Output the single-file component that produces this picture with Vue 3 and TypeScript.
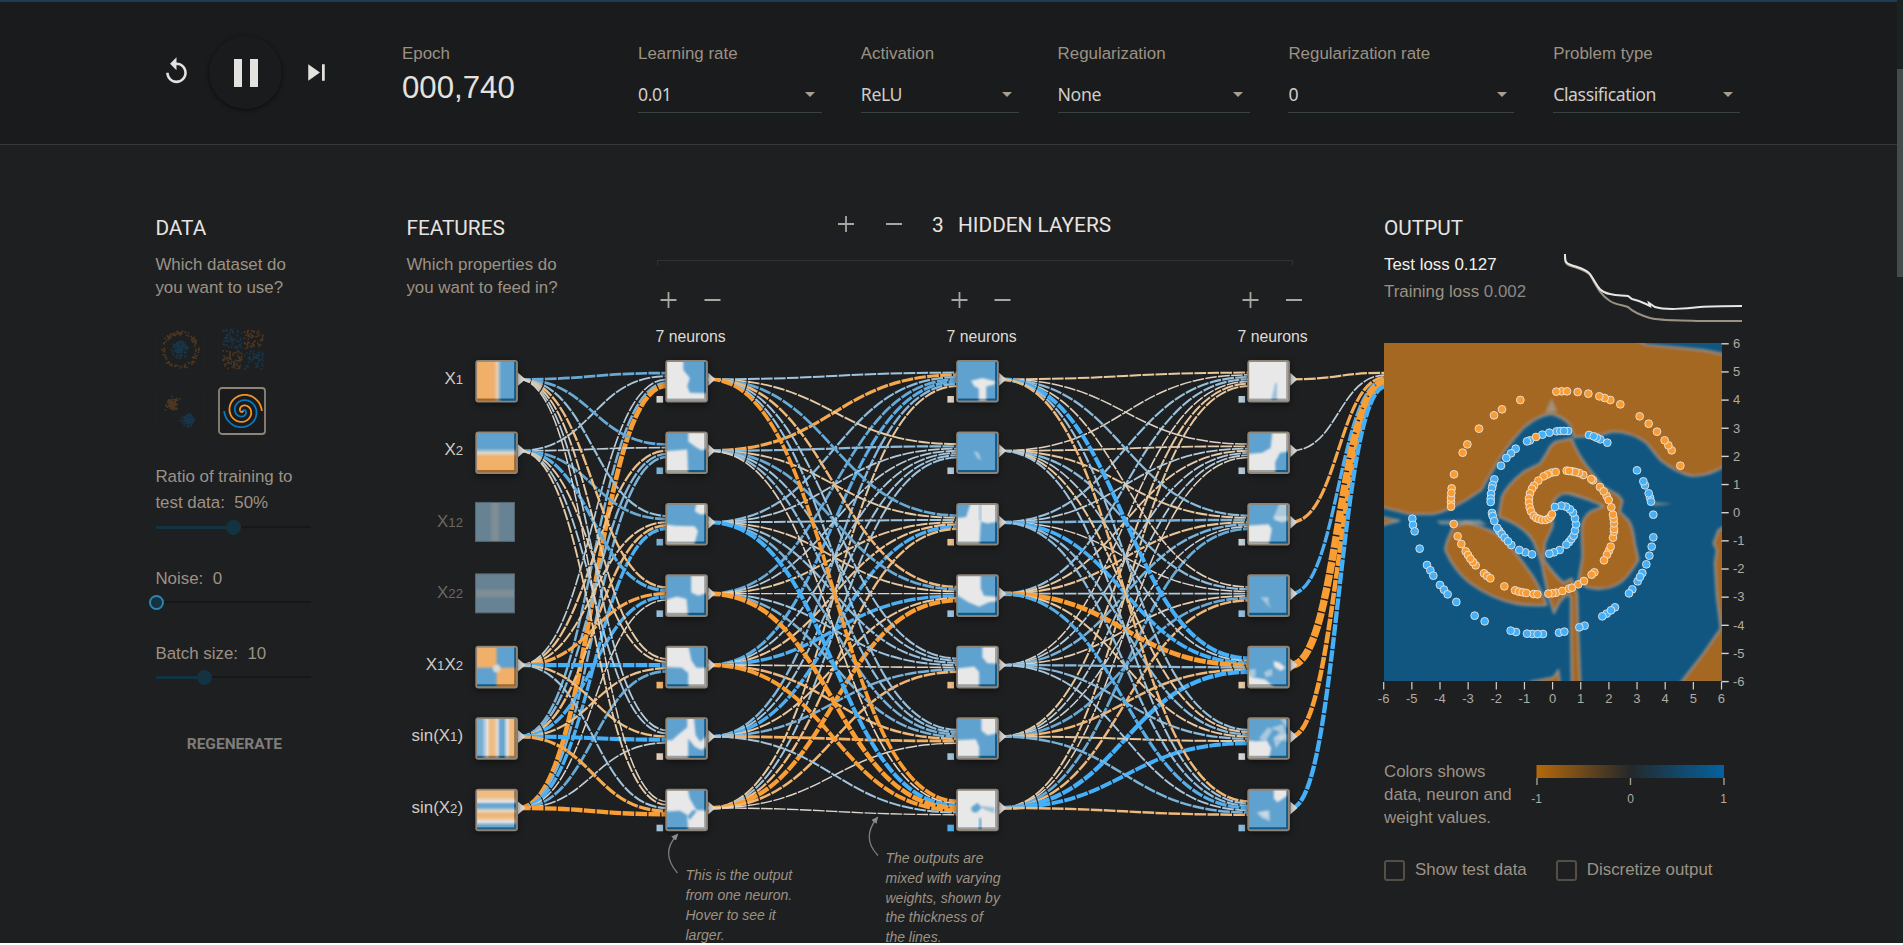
<script setup lang="ts">
interface Field { label: string; value: string; width: number }
interface Heat { base: 'w' | 'b'; shapes: string[]; faint?: string[] }
type Pt = [number, number]

const fields: Field[] = [
  { label: 'Learning rate', value: '0.01', width: 184 },
  { label: 'Activation', value: 'ReLU', width: 158 },
  { label: 'Regularization', value: 'None', width: 192 },
  { label: 'Regularization rate', value: '0', width: 226 },
  { label: 'Problem type', value: 'Classification', width: 187 },
]

const rowY = (i: number) => 360 + i * 71.45
const midY = (i: number) => rowY(i) + 19.3
const layerX = [475.3, 665.3, 956.2, 1247.3]

const featureRows = [
  { row: 0, kind: 'x', on: true, text: [['X', '1']] },
  { row: 1, kind: 'y', on: true, text: [['X', '2']] },
  { row: 2, kind: 'xx', on: false, text: [['X', '12']] },
  { row: 3, kind: 'yy', on: false, text: [['X', '22']] },
  { row: 4, kind: 'xy', on: true, text: [['X', '1'], ['X', '2']] },
  { row: 5, kind: 'sx', on: true, text: [['sin(X', '1'], [')', '']] },
  { row: 6, kind: 'sy', on: true, text: [['sin(X', '2'], [')', '']] },
]

// weights[layer][target][source]
const weights: number[][][] = [
  [
    [0.6, 0.25, 0.15, 0.5, -1.5],
    [0.6, 0.15, -0.4, 0.45, 0.5],
    [0.35, 0.6, -0.3, -0.5, 0.9],
    [-0.45, 0.8, -0.8, 0.9, -0.08],
    [-0.25, -0.25, 1.2, -0.4, 0.6],
    [0.2, 0.25, -0.45, 1.2, 0.15],
    [-0.08, -0.25, 0.3, -0.8, -1.3],
  ],
  [
    [0.3, -0.8, 0.4, 0.6, 0.75, 0.45, -0.3],
    [-0.25, 0.4, 0.2, 0.2, 0.25, 0.3, 0.3],
    [0.6, -0.25, 0.3, -0.3, -0.35, 0.9, -0.45],
    [-0.5, 0.6, -0.25, -0.05, 0.9, -0.3, -1.3],
    [0.3, 0.3, 0.35, 0.3, -0.15, 0.5, -0.55],
    [0.35, 0.4, 0.5, 0.5, -0.5, -0.65, -0.05],
    [-1.0, -0.15, 1.2, -1.4, -1.1, 0.3, -0.05],
  ],
  [
    [-0.3, -0.1, 0.35, 0.35, -0.1, -0.3, -0.3],
    [-0.1, -0.2, 0.2, -0.25, 0.2, 0.2, -0.1],
    [0.4, -0.3, 0.5, -0.35, 0.5, 0.1, 0.6],
    [-0.15, 0.4, -0.05, 0.2, -0.2, 0.6, -0.5],
    [1.2, 0.2, 1, -1.5, 0.4, -0.5, 1.3],
    [0.35, -0.3, 0.4, -0.3, 0.4, -0.3, 1.1],
    [-0.5, 0.3, 0.4, 0.8, 0.25, 0.5, -0.5],
  ],
]
const outWeights = [-0.4, 0.15, -0.8, 0.9, -2.6, -1.4, 1.3]

type RGB = [number, number, number]
const blueStops: [number, RGB][] = [[0, [220, 216, 213]], [0.3, [160, 196, 221]], [0.6, [104, 170, 214]], [1, [68, 176, 250]]]
const orangeStops: [number, RGB][] = [[0, [220, 216, 213]], [0.3, [232, 200, 158]], [0.6, [242, 178, 105]], [1, [250, 158, 52]]]
function tone(w: number): string {
  const stops = w >= 0 ? blueStops : orangeStops
  const a = Math.min(1, Math.abs(w))
  let k = 1
  while (k < stops.length - 1 && a > stops[k][0]) k++
  const [t0, c0] = stops[k - 1]
  const [t1, c1] = stops[k]
  const f = (a - t0) / (t1 - t0)
  return `rgb(${c0.map((v, i) => Math.round(v + (c1[i] - v) * f)).join(',')})`
}
const curve = (x0: number, y0: number, x1: number, y1: number) => {
  const m = (x0 + x1) / 2
  return `M${x0},${y0}C${m},${y0} ${m},${y1} ${x1},${y1}`
}
const spread = (i: number, n: number) => ((i - (n - 1) / 2) / n) * 15.6

const sourceRows = [[0, 1, 4, 5, 6], [0, 1, 2, 3, 4, 5, 6], [0, 1, 2, 3, 4, 5, 6]]
const links: { d: string; w: number }[] = []
weights.forEach((layer, l) => layer.forEach((ws, t) => ws.forEach((w, s) => {
  links.push({ d: curve(layerX[l] + 43.5, midY(sourceRows[l][s]), layerX[l + 1] + 2, midY(t) + spread(s, ws.length)), w })
})))
outWeights.forEach((w, s) => links.push({ d: curve(layerX[3] + 43.5, midY(s), 1386, 379.5 + spread(s, 7)), w }))
const linkWidth = (w: number) => 1.3 * (1 + 1.8 * Math.abs(w))

const biases = [
  [0.02, 0.5, 0.5, 0.35, -0.6, -0.15, 0.3],
  [-0.1, 0.2, -0.4, 0.3, -0.45, 0.3, 0.85],
  [0.2, 0.2, 0.12, 0.35, -0.25, 0.02, 0.4],
]

const heats: Heat[][] = [
  [
    { base: 'w', shapes: ['M50,-9V25L70,50L62,75L70,95L129,97V-9Z'] },
    { base: 'b', shapes: ['M65,-9V25L88,42L105,52L129,48V-9Z', 'M-9,55L62,50L65,129H-9Z'] },
    { base: 'b', shapes: ['M92,-9L85,20L102,30L129,28V-9Z', 'M-9,60L25,65L85,66L95,82L82,129H-9Z'] },
    { base: 'b', shapes: ['M74,-9V50L95,60L129,50V-9Z', 'M-9,75L30,63L60,70L65,129H-9Z'] },
    { base: 'w', shapes: ['M65,-9L75,40L90,62H129V-9Z', 'M-9,60L45,62L65,78V129H-9Z'] },
    { base: 'w', shapes: ['M-9,-9H62V25L32,50L15,65H-9Z', 'M82,-9L88,50L102,70L129,45V-9Z', 'M65,60V129H129V82L105,95L85,85Z'] },
    { base: 'w', shapes: ['M62,-9L70,25L90,60L129,62V-9Z', 'M-9,65L40,62L62,75L65,129H-9Z', 'M70,90L92,62L80,60L62,80Z'] },
  ],
  [
    { base: 'b', shapes: ['M40,58L75,50L115,60L112,70L87,76V129H64V82L50,75Z'] },
    { base: 'b', shapes: [], faint: ['M48,56L62,58L72,82L60,78Z'] },
    { base: 'w', shapes: ['M-9,-9H40L25,38L-9,42Z', 'M70,52L90,58L129,52V129H66Z'], faint: ['M65,0H72V50H65Z'] },
    { base: 'b', shapes: ['M-9,-9H70V38L80,60L129,64V76L95,80L65,94L32,80L-9,55Z'] },
    { base: 'b', shapes: ['M75,-9V30L90,48L129,50V-9Z', 'M-9,65L50,58L65,75V129H-9Z'] },
    { base: 'b', shapes: ['M72,-9V35L90,50L129,42V-9Z', 'M-9,65L55,62L65,85V129H-9Z'] },
    { base: 'w', shapes: ['M40,52L60,38L72,54L58,68L44,66Z', 'M65,85H72V129H65Z'], faint: ['M60,46L112,52V70L85,60Z'] },
  ],
  [
    { base: 'w', shapes: [], faint: ['M80,65H86V120H68Z'] },
    { base: 'w', shapes: ['M-9,-9H72L66,45L40,60L-9,64Z', 'M129,55L95,60L80,90L82,129H129Z'] },
    { base: 'b', shapes: ['M-9,65L60,60L70,75L60,129H-9Z'], faint: ['M95,-9L75,40L100,56L129,45V-9Z', 'M75,35H129V50H80Z'] },
    { base: 'b', shapes: [], faint: ['M35,65L60,65L60,85L70,98L58,90Z'] },
    { base: 'b', shapes: ['M-9,82L15,92L50,98L85,129H-9Z', 'M75,42L92,45L112,62L98,72L78,60Z'], faint: ['M45,76L70,65L72,85L52,92Z', 'M-9,70L20,65V90H-9Z'] },
    { base: 'b', shapes: ['M-9,65L20,68L55,66L68,90L60,129H-9Z'], faint: ['M30,60L58,25L72,34L50,70Z', 'M65,28L105,15L114,50L82,90L75,60L95,40Z', 'M70,60L118,45V70L85,60Z', 'M95,0H120V30Z'] },
    { base: 'b', shapes: ['M76,-9V25L88,36L118,15V-9Z'], faint: ['M22,68L62,60L65,95L40,85Z', 'M30,66L58,64L60,84L44,80Z'] },
  ],
]
const heatTone = { w: '#e8e8e8', b: '#5fa2cf' }

const bluePts: Pt[] = [[127, 566], [129, 585], [134, 604], [149, 656], [171, 705], [181, 721], [190, 737], [210, 765], [222, 779], [233, 793], [259, 816], [314, 857], [344, 874], [438, 906], [422, 902], [519, 912], [487, 912], [503, 912], [471, 911], [567, 908], [583, 905], [644, 887], [628, 892], [735, 832], [710, 851], [723, 841], [697, 859], [787, 778], [777, 790], [817, 729], [803, 754], [810, 741], [829, 703], [838, 677], [845, 650], [850, 622], [850, 554], [840, 503], [843, 515], [836, 490], [825, 466], [820, 454], [801, 421], [712, 338], [691, 328], [680, 323], [657, 315], [671, 319], [594, 303], [560, 304], [571, 303], [582, 303], [538, 308], [517, 314], [480, 331], [471, 334], [437, 356], [423, 370], [409, 384], [393, 407], [373, 448], [368, 465], [366, 475], [363, 492], [362, 506], [362, 516], [366, 549], [368, 558], [373, 573], [388, 603], [382, 594], [395, 612], [404, 623], [424, 645], [414, 634], [466, 667], [448, 660], [486, 673], [569, 660], [552, 667], [538, 671], [597, 636], [589, 644], [604, 627], [611, 617], [615, 602], [618, 583], [615, 565], [609, 548], [600, 538], [588, 530], [574, 527], [555, 531]]
const orangePts: Pt[] = [[931, 407], [905, 361], [895, 346], [884, 331], [861, 305], [836, 281], [809, 259], [751, 223], [721, 210], [704, 204], [688, 199], [655, 191], [623, 186], [575, 184], [591, 184], [559, 185], [451, 210], [396, 238], [372, 256], [327, 296], [292, 343], [278, 368], [252, 433], [245, 475], [243, 516], [243, 503], [244, 489], [243, 530], [251, 582], [263, 619], [274, 642], [287, 664], [294, 675], [317, 706], [309, 696], [301, 686], [342, 730], [351, 738], [361, 745], [403, 769], [435, 781], [447, 785], [458, 787], [469, 789], [491, 792], [502, 793], [558, 788], [547, 790], [535, 791], [577, 783], [597, 776], [606, 773], [625, 763], [642, 753], [673, 727], [665, 734], [717, 662], [711, 674], [702, 691], [722, 650], [729, 623], [732, 605], [732, 597], [732, 580], [731, 566], [729, 554], [724, 532], [710, 498], [716, 510], [690, 471], [701, 484], [669, 451], [664, 447], [640, 435], [627, 429], [606, 424], [616, 426], [590, 422], [597, 423], [545, 428], [557, 426], [533, 433], [521, 439], [505, 452], [492, 467], [486, 476], [480, 490], [477, 505], [477, 518], [479, 532], [483, 544], [491, 557], [499, 564], [507, 567], [517, 570], [527, 570], [536, 566], [542, 560], [546, 553], [498, 321]]

const ticks = Array.from({ length: 13 }, (_, i) => i - 6)

// Deterministic generator for the dataset thumbnails.
function rng(seed: number) {
  let s = seed
  return () => { s = (s * 16807) % 2147483647; return s / 2147483647 }
}
interface Dot { x: number; y: number; o: boolean }
function circleDots(): Dot[] {
  const r = rng(7), out: Dot[] = []
  for (let i = 0; i < 110; i++) { const a = r() * 6.283, d = 15 + r() * 4; out.push({ x: 24 + d * Math.cos(a), y: 24 + d * Math.sin(a), o: true }) }
  for (let i = 0; i < 130; i++) { const a = r() * 6.283, d = r() * 9; out.push({ x: 24 + d * Math.cos(a), y: 24 + d * Math.sin(a), o: false }) }
  return out
}
function xorDots(): Dot[] {
  const r = rng(21), out: Dot[] = []
  for (let i = 0; i < 250; i++) {
    const a = r() * 38 - 19, b = r() * 38 - 19
    out.push({ x: 25 + a + Math.sign(a), y: 23.5 + b + Math.sign(b), o: a * b < 0 })
  }
  return out
}
function gaussDots(): Dot[] {
  const r = rng(5), out: Dot[] = []
  const g = () => (r() + r() + r() + r() - 2) * 5
  for (let i = 0; i < 110; i++) { out.push({ x: 16.5 + g(), y: 17 + g(), o: true }); out.push({ x: 32.5 + g(), y: 32.5 + g(), o: false }) }
  return out
}
function spiral(delta: number): string {
  const p: string[] = []
  for (let i = 0; i <= 90; i++) {
    const t = (i / 90) * 3.5 * Math.PI + delta, d = (i / 90) * 18.8
    p.push(`${(25 + d * Math.sin(t)).toFixed(1)},${(24 - d * Math.cos(t)).toFixed(1)}`)
  }
  return 'M' + p.join('L')
}
const datasets = [circleDots(), xorDots(), gaussDots()]

const sliders = [
  { lines: ['Ratio of training to', 'test data:\u00a0 50%'], at: 50, kind: 'ratio' },
  { lines: ['Noise:\u00a0 0'], at: 0.4, kind: 'noise' },
  { lines: ['Batch size:\u00a0 10'], at: 31.3, kind: 'batch' },
]
const layerHeads = [
  { plus: 668.5, minus: 712.5, text: 655.5 },
  { plus: 959.5, minus: 1002.5, text: 946.5 },
  { plus: 1250.5, minus: 1294, text: 1237.5 },
]
</script>

<template>
  <div class="page">
    <div class="content">
      <header class="bar">
        <div class="controls">
          <svg class="reset" viewBox="0 0 24 24"><path d="M12 5V1L7 6l5 5V7c3.31 0 6 2.69 6 6s-2.69 6-6 6-6-2.69-6-6H4c0 4.42 3.58 8 8 8s8-3.58 8-8-3.58-8-8-8z" /></svg>
          <div class="play"><svg viewBox="0 0 24 24"><path d="M6 19h4V5H6v14zm8-14v14h4V5h-4z" /></svg></div>
          <svg class="next" viewBox="0 0 24 24"><path d="M6 18l8.5-6L6 6v12zM16 6v12h2V6h-2z" /></svg>
        </div>
        <div class="epoch">
          <span class="label">Epoch</span>
          <span class="count">000,740</span>
        </div>
        <div class="fields">
          <div v-for="f in fields" :key="f.label" class="field" :style="{ width: f.width + 'px' }">
            <span class="label">{{ f.label }}</span>
            <div class="select"><span>{{ f.value }}</span><i class="caret"></i></div>
          </div>
        </div>
      </header>

      <main class="main">
        <section class="data">
          <h4>DATA</h4>
          <p class="sub">Which dataset do<br />you want to use?</p>
          <div class="sets">
            <svg v-for="(s, i) in datasets" :key="i" class="thumb" viewBox="0 0 48 48">
              <rect x=".5" y=".5" width="47" height="47" rx="3" class="thumb-edge" />
              <rect v-for="(p, j) in s" :key="j" :x="p.x - 0.8" :y="p.y - 0.8" width="1.6" height="1.6" :class="p.o ? 'dim-o' : 'dim-b'" />
            </svg>
            <svg class="thumb picked" viewBox="0 0 48 48">
              <rect x="1" y="1" width="46" height="46" rx="3" class="picked-edge" />
              <path :d="spiral(0)" class="sp-b" /><path :d="spiral(Math.PI)" class="sp-o" />
            </svg>
          </div>
          <div v-for="s in sliders" :key="s.kind" class="slider" :class="s.kind">
            <span v-for="l in s.lines" :key="l">{{ l }}</span>
            <div class="track">
              <div class="fill" :style="{ width: s.at + '%' }"></div>
              <div class="knob"></div>
            </div>
          </div>
          <button class="regen">REGENERATE</button>
        </section>

        <section class="network">
          <h4>FEATURES</h4>
          <p class="sub">Which properties do<br />you want to feed in?</p>
          <svg class="net" viewBox="407 145 977 798" width="977" height="798">
            <defs>
              <filter id="soft" x="-20%" y="-20%" width="140%" height="140%"><feGaussianBlur stdDeviation="3.6" /></filter>
              <clipPath id="cell"><rect width="120" height="120" rx="2" /></clipPath>
              <linearGradient id="gx"><stop offset=".42" stop-color="#f1b06a" /><stop offset=".52" stop-color="#e0cdb6" /><stop offset=".63" stop-color="#5fa2cf" /></linearGradient>
              <linearGradient id="gy" x2="0" y2="1"><stop offset=".38" stop-color="#5fa2cf" /><stop offset=".5" stop-color="#dcd6cc" /><stop offset=".6" stop-color="#f1b06a" /></linearGradient>
              <linearGradient id="gxx"><stop offset=".35" stop-color="#668293" /><stop offset=".45" stop-color="#7f8d94" /><stop offset=".55" stop-color="#7f8d94" /><stop offset=".65" stop-color="#668293" /></linearGradient>
              <linearGradient id="gyy" x2="0" y2="1"><stop offset=".35" stop-color="#668293" /><stop offset=".45" stop-color="#7f8d94" /><stop offset=".55" stop-color="#7f8d94" /><stop offset=".65" stop-color="#668293" /></linearGradient>
              <linearGradient id="gsx"><stop offset="0" stop-color="#78add4" /><stop offset=".12" stop-color="#78add4" /><stop offset=".26" stop-color="#e4e2e0" /><stop offset=".33" stop-color="#efbd84" /><stop offset=".43" stop-color="#efbd84" /><stop offset=".52" stop-color="#ddd8d2" /><stop offset=".6" stop-color="#6aa7d0" /><stop offset=".68" stop-color="#6aa7d0" /><stop offset=".77" stop-color="#e4e2e0" /><stop offset=".86" stop-color="#efbd84" /><stop offset="1" stop-color="#efbd84" /></linearGradient>
              <linearGradient id="gsy" x2="0" y2="1"><stop offset="0" stop-color="#efbd84" /><stop offset=".16" stop-color="#efbd84" /><stop offset=".28" stop-color="#e4e2e0" /><stop offset=".36" stop-color="#6aa7d0" /><stop offset=".42" stop-color="#6aa7d0" /><stop offset=".52" stop-color="#e0d6c8" /><stop offset=".62" stop-color="#efb272" /><stop offset=".7" stop-color="#efbd84" /><stop offset=".8" stop-color="#e4e2e0" /><stop offset=".9" stop-color="#6aa7d0" /><stop offset="1" stop-color="#78add4" /></linearGradient>
              <marker id="tip" markerWidth="8" markerHeight="8" refX="5" refY="4" orient="auto" markerUnits="userSpaceOnUse"><path d="M0,.8L7,4L0,7.2Z" class="tip" /></marker>
            </defs>

            <path d="M657.5,265V260.5H1292.5V265" class="bracket" />
            <g class="pm">
              <path d="M838,224h16M846,216v16M886,224h16" />
              <path v-for="h in layerHeads" :key="h.plus" :d="`M${h.plus - 8},300h16M${h.plus},292v16M${h.minus - 8},300h16`" />
            </g>
            <text x="932" y="232" class="hl">3</text>
            <text x="958" y="232" class="hl">HIDDEN LAYERS</text>
            <text v-for="h in layerHeads" :key="h.text" :x="h.text" y="342" class="nn">7 neurons</text>

            <path v-for="(l, i) in links" :key="i" :d="l.d" class="link" :stroke="tone(l.w)" :stroke-width="linkWidth(l.w)" />

            <g v-for="f in featureRows" :key="f.kind">
              <text x="463" :y="rowY(f.row) + 24" class="fl" :class="{ off: !f.on }"><template v-for="(p, k) in f.text" :key="k">{{ p[0] }}<tspan class="small">{{ p[1] }}</tspan></template></text>
              <template v-if="f.on">
                <path :d="`M518,${midY(f.row) - 6.5}L525.5,${midY(f.row)}L518,${midY(f.row) + 6.5}Z`" class="tri" />
                <g :transform="`translate(${layerX[0]},${rowY(f.row)})`">
                  <rect width="42.6" height="42.6" rx="3" class="frame" />
                  <g transform="translate(1.8,1.8) scale(.325)" class="iso">
                    <template v-if="f.kind === 'xy'">
                      <rect width="120" height="120" fill="#f1b06a" />
                      <g clip-path="url(#cell)"><path d="M60,-9V62H-9V129H60V62H129V-9Z" fill="#5fa2cf" filter="url(#soft)" /><circle cx="60" cy="64" r="12" fill="#ddd8d0" filter="url(#soft)" /></g>
                    </template>
                    <rect v-else width="120" height="120" :fill="`url(#g${f.kind})`" />
                    <path d="M120,0V120H0V113H114V0Z" class="edge" />
                  </g>
                </g>
              </template>
              <rect v-else :x="475.5" :y="rowY(f.row) - 0.5" width="39" height="39" :fill="`url(#g${f.kind})`" class="off-frame" />
            </g>

            <template v-for="(layer, l) in heats" :key="l">
              <g v-for="(h, n) in layer" :key="n" :transform="`translate(${layerX[l + 1]},${rowY(n)})`">
                <path d="M43,12.8L50.2,19.3L43,25.8Z" class="tri" />
                <rect x="-8.8" y="36" width="6.6" height="6.6" :fill="tone(biases[l][n])" />
                <rect width="42.6" height="42.6" rx="3" class="frame" />
                <g transform="translate(1.8,1.8) scale(.325)" class="iso" clip-path="url(#cell)">
                  <rect width="120" height="120" :fill="heatTone[h.base]" />
                  <path v-for="(s, k) in h.shapes" :key="k" :d="s" :fill="heatTone[h.base === 'w' ? 'b' : 'w']" filter="url(#soft)" />
                  <path v-for="(s, k) in h.faint ?? []" :key="'f' + k" :d="s" :fill="heatTone[h.base === 'w' ? 'b' : 'w']" filter="url(#soft)" opacity=".55" />
                  <path d="M120,0V120H0V113H114V0Z" class="edge" />
                </g>
              </g>
            </template>

            <path d="M677.5,873Q660,853 677,835" class="arrow" marker-end="url(#tip)" />
            <path d="M878,855.5Q861,838 877,818" class="arrow" marker-end="url(#tip)" />
            <text class="note"><tspan x="685.5" y="880">This is the output</tspan><tspan x="685.5" y="900">from one neuron.</tspan><tspan x="685.5" y="920">Hover to see it</tspan><tspan x="685.5" y="940">larger.</tspan></text>
            <text class="note"><tspan x="885.5" y="863">The outputs are</tspan><tspan x="885.5" y="882.5">mixed with varying</tspan><tspan x="885.5" y="902.5">weights, shown by</tspan><tspan x="885.5" y="922">the thickness of</tspan><tspan x="885.5" y="942">the lines.</tspan></text>
          </svg>
        </section>

        <section class="output">
          <div class="head">
            <div class="losses">
              <h4>OUTPUT</h4>
              <span class="test">Test loss 0.127</span>
              <span class="train">Training loss <em>0.002</em></span>
            </div>
            <svg class="chart" viewBox="1560 250 184 76" width="184" height="76">
              <path d="M1565,254C1565,262 1565,264 1571,266C1580,269 1586,270 1590,275C1596,284 1599,294 1610,301C1616,305 1623,305 1628,307C1632,311 1640,315 1650,318C1662,321 1680,320 1700,321H1742" class="c-train" />
              <path d="M1565,254C1565,261 1565,263 1571,265C1580,268 1586,269 1590,274C1597,284 1598,292 1610,294C1618,296 1622,295 1628,296L1632,299C1637,300 1642,302 1646,304L1650,306L1649,303L1655,307C1664,310 1685,309 1700,307C1712,306 1726,306 1742,306" class="c-test" />
            </svg>
          </div>
          <svg class="plot" viewBox="1376 336 380 374" width="380" height="374">
            <defs>
              <filter id="haze" x="-5%" y="-5%" width="110%" height="110%"><feGaussianBlur stdDeviation="4" /></filter>
              <clipPath id="area"><rect x="42" y="39" width="1014" height="1014" /></clipPath>
            </defs>
            <g transform="translate(1370,330) scale(.33333)">
              <g clip-path="url(#area)">
                <rect x="42" y="39" width="1014" height="1014" fill="#105680" />
                <g class="warm" filter="url(#haze)">
                  <path d="M20,20H780L830,44L900,50L1000,60L1080,76V400L1040,422Q1000,440 965,438Q920,430 870,390Q850,365 830,340Q790,308 730,305Q700,315 670,318L612,322L600,285Q580,262 545,252Q505,255 460,295Q400,360 370,420Q350,450 335,480L290,510Q230,545 190,553H120L20,528Z" />
                  <path d="M555,335L605,325Q625,380 665,425L700,470L745,495L758,512L750,545L775,570Q790,590 795,640L806,690Q770,750 740,765Q700,785 650,772L625,750L637,680L634,590Q640,560 660,545L700,528Q650,505 600,492Q565,485 550,520L548,590L525,640L522,690Q550,730 580,758L605,745L622,790L625,900L632,1070H605L602,900V800L590,795L570,815L552,850L535,800L520,730Q515,690 490,635Q470,600 420,575L385,560L395,500Q410,465 460,425L510,400Q530,370 540,350Z" />
                  <path d="M250,590Q225,640 225,660Q250,720 300,760Q370,810 440,822Q490,830 530,825Q520,790 490,740Q455,690 430,660Q390,610 350,597Q310,580 290,575Z" />
                  <path d="M20,558L90,572L20,590Z" />
                  <path d="M480,1056L550,1042L565,1020L572,1070H480Z" />
                  <path d="M1080,580L1045,600L1030,640L1040,660L1034,700L1040,800L1052,895L1000,970L930,1060H1080Z" />
                </g>
                <g class="smear" filter="url(#haze)">
                  <path d="M545,205L562,245L525,248Z" />
                  <path d="M850,517L910,521L850,527Z" />
                  <path d="M200,572L330,570L350,585L210,583Z" />
                </g>
              </g>
              <circle v-for="(p, i) in bluePts" :key="'b' + i" :cx="p[0]" :cy="p[1]" r="11.7" class="pb" />
              <circle v-for="(p, i) in orangePts" :key="'o' + i" :cx="p[0]" :cy="p[1]" r="11.7" class="po" />
            </g>
            <g v-for="t in ticks" :key="t" class="axis">
              <rect :x="1721.5" :y="512 - t * 28.15" width="7.2" height="1.4" />
              <rect :x="1552 + t * 28.15" y="682" width="1.2" height="7.5" />
              <text :x="1552.5 + t * 28.15" y="702.5" text-anchor="middle">{{ t }}</text>
              <text x="1733" :y="517 - t * 28.15">{{ t }}</text>
            </g>
          </svg>
          <div class="legend">
            <p>Colors shows<br />data, neuron and<br />weight values.</p>
            <svg viewBox="1530 770 200 50" width="200" height="50">
              <defs><linearGradient id="scale"><stop offset="0" stop-color="#b5690b" /><stop offset=".5" stop-color="#24282b" /><stop offset="1" stop-color="#04629f" /></linearGradient></defs>
              <rect x="1536.5" y="776" width="187.5" height="13" fill="url(#scale)" />
              <path d="M1537,789v7M1630.5,789v7M1724,789v7" class="lt" />
              <text x="1536.5" y="813.5">-1</text><text x="1630.5" y="813.5">0</text><text x="1723.5" y="813.5">1</text>
            </svg>
          </div>
          <div class="checks">
            <label><i class="box"></i>Show test data</label>
            <label><i class="box"></i>Discretize output</label>
          </div>
        </section>
      </main>
    </div>
    <div class="scroll"><i></i></div>
  </div>
</template>

<style>
html, body { background: #fff; overflow: hidden; }
</style>

<style scoped>
.page { display: flex; width: 1903px; height: 943px; overflow: hidden; background: #1e1f21; color: #9c9284; font-family: "Liberation Sans", Arial, sans-serif; font-size: 16.9px; }
.content { width: 1897px; flex: none; }
.scroll { width: 6px; background: #1c2122; padding-top: 69px; box-sizing: border-box; }
.scroll i { display: block; height: 208px; background: #454a4d; }
.bar { box-sizing: border-box; height: 145px; border-top: 2px solid #1d3d52; border-bottom: 1px solid #34393b; background: #1a1b1d; display: flex; }
.controls { width: 402px; box-sizing: border-box; padding: 34px 0 0 161px; height: 107px; display: flex; align-items: center; }
.controls svg { fill: #e4e2de; display: block; }
.reset { width: 31px; height: 31px; margin-top: -3px; }
.play { width: 73px; height: 73px; border-radius: 50%; margin-left: 17px; display: flex; align-items: center; justify-content: center; box-shadow: 0 1px 4px rgba(0, 0, 0, .6); }
.play svg { width: 48px; height: 48px; }
.next { width: 33px; height: 33px; margin-left: 18px; }
.epoch { width: 236px; display: flex; flex-direction: column; }
.label { display: block; margin-top: 42px; line-height: 20px; }
.count { color: #e4e2de; font-size: 31.2px; line-height: 36px; margin-top: 6px; }
.fields { display: flex; gap: 38.8px; }
.select { display: flex; justify-content: space-between; align-items: center; height: 30px; margin-top: 14px; padding: 1px 7px 3px 0; border-bottom: 1px solid #384143; color: #cfccc6; font: 17.7px/30px "Noto Sans", sans-serif; letter-spacing: -.42px; }
.caret { border: 5px solid transparent; border-top-color: #a79e90; border-bottom: 0; margin-top: 1px; }
.main { display: flex; padding-left: 155.4px; height: 798px; }
h4 { margin: 0; padding-top: 71px; font: 400 20.8px/24px Roboto, sans-serif; color: #e6e4e0; }
.sub { margin: 13px 0 0; line-height: 23px; }
.data { width: 251px; }
.sets { display: grid; grid-template-columns: 48px 48px; gap: 13px 14px; margin-top: 27px; margin-bottom: 29px; margin-left: .6px; }
.thumb { display: block; width: 48px; height: 48px; overflow: visible; }
.thumb-edge { fill: none; stroke: #202122; }
.dim-o { fill: #4e3820; } .dim-b { fill: #19364a; }
.picked-edge { fill: #1a1b1d; stroke: #8f8577; stroke-width: 1.8; }
.sp-b, .sp-o { fill: none; stroke-width: 1.8; }
.sp-b { stroke: #0877bd; } .sp-o { stroke: #f59322; }
.slider { width: 156px; }
.slider span { display: block; line-height: 26px; white-space: nowrap; }
.track { display: flex; align-items: center; height: 16px; margin-top: 3px; margin-left: .6px; background: linear-gradient(#161718, #161718) center / 100% 2px no-repeat; }
.fill { height: 3px; background: #143342; }
.knob { width: 15px; height: 15px; border-radius: 50%; background: #143342; margin-left: -7.5px; flex: none; }
.noise { margin-top: 31px; } .batch { margin-top: 31px; }
.noise .track, .batch .track { margin-top: 2px; }
.noise .knob { box-sizing: border-box; border: 2px solid #2f84ae; }
.regen { display: block; width: 156px; margin: 47px 0 0 1px; padding: 0; border: 0; background: none; font: 700 15.5px/24px Roboto, sans-serif; color: #7f7c79; }
.network { width: 977.6px; position: relative; }
.net { position: absolute; left: .6px; top: 0; }
.bracket { fill: none; stroke: #323130; }
.pm path { stroke: #aaa6a1; stroke-width: 1.8; }
.hl { font: 20.8px Roboto, sans-serif; fill: #e6e4e0; }
.nn { font-size: 15.8px; fill: #dedbd6; }
.link { fill: none; stroke-dasharray: 11.7 1.3; }
.fl { text-anchor: end; fill: #cfccc6; font-size: 16.9px; }
.fl.off { fill: #6b6864; }
.small { font-size: 13.2px; }
.tri { fill: #dddad6; }
.frame { fill: #8f8577; filter: drop-shadow(0 2px 3px rgba(0, 0, 0, .5)); }
.iso { isolation: isolate; }
.edge { fill: #4d4846; mix-blend-mode: difference; }
.off-frame { stroke: #566670; stroke-width: 1; }
.arrow { fill: none; stroke: #7f7d7a; stroke-width: 1.3; }
.tip { fill: #8f8d8a; }
.note { font-style: italic; font-size: 14px; fill: #9c9284; }
.output { width: 400px; }
.head { display: flex; height: 191px; }
.losses { width: 176px; display: flex; flex-direction: column; white-space: nowrap; }
.test { color: #f2f0ec; line-height: 26px; margin-top: 12px; }
.train { line-height: 26px; padding-top: 1px; }
.train em { font-style: normal; color: #8b8985; }
.chart { margin-top: 105px; }
.c-test, .c-train { fill: none; stroke-width: 2; stroke: #e8e6e2; }
.c-train { stroke: #9c9284; }
.plot { display: block; margin-left: -8px; }
.warm { fill: #a46822; stroke: #a9a39a; stroke-width: 4; }
.smear { fill: #9fa09c; opacity: .75; }
.pb, .po { stroke: rgba(235, 232, 228, .85); stroke-width: 3; }
.pb { fill: #45b0f7; } .po { fill: #f89c33; }
.axis text, .legend text { font-size: 13px; fill: #b0aba3; }
.axis rect { fill: #d5d2cc; }
.legend { display: flex; margin-top: 49px; }
.legend p { margin: 0; width: 146px; line-height: 23px; padding-top: 1px; white-space: nowrap; }
.legend text { text-anchor: middle; font-size: 12px; }
.lt { stroke: #a59c8e; stroke-width: 1.4; }
.checks { display: flex; gap: 29px; margin-top: 28px; }
.checks label { display: flex; align-items: center; gap: 10px; line-height: 26px; white-space: nowrap; }
.box { box-sizing: border-box; width: 21px; height: 21px; border: 2px solid #534f47; border-radius: 3px; }
</style>
